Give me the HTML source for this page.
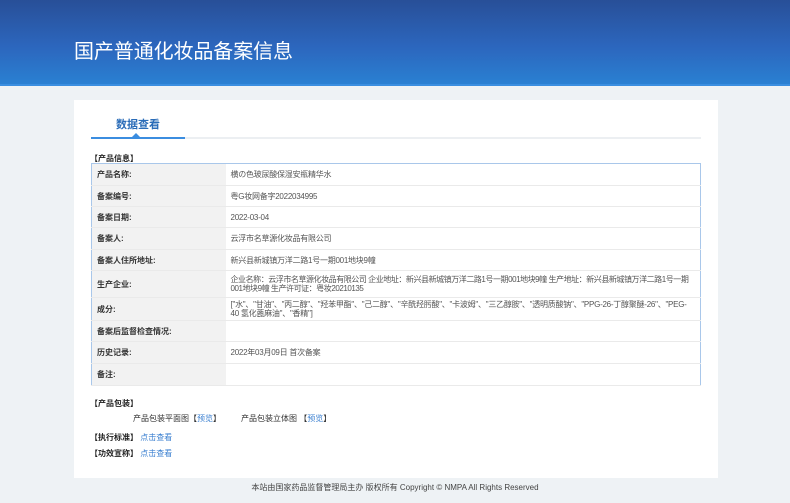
<!DOCTYPE html>
<html><head><meta charset="utf-8"><style>
*{margin:0;padding:0;box-sizing:border-box}
body{width:790px;height:503px;background:#eef2f5;font-family:"Liberation Sans","Noto Sans CJK SC",sans-serif;position:relative;overflow:hidden;color:#333}
.hd{position:absolute;left:0;top:0;width:790px;height:86px;background:linear-gradient(180deg,#284f98 0%,#2c66bd 55%,#2a80d2 100%);border-bottom:2px solid #3a8ee0}
.hd h1{position:absolute;left:74px;top:35px;font-size:20px;font-weight:normal;color:#fff;letter-spacing:-0.1px}
.panel{position:absolute;left:74px;top:100px;width:644px;height:378px;background:#fff}
.tab{position:absolute;left:116px;top:116px;font-size:11px;font-weight:bold;color:#2a6cb8}
.tabline{position:absolute;left:91px;top:137px;width:610px;height:2px;background:#eceff2}
.tabact{position:absolute;left:91px;top:137px;width:94px;height:2px;background:#3b8de0}
.tri{position:absolute;left:132px;top:133px;width:0;height:0;border-left:4px solid transparent;border-right:4px solid transparent;border-bottom:4px solid #3b8de0}
.sec{position:absolute;font-size:8px;font-weight:bold;color:#222}
table{position:absolute;left:91px;top:163px;width:610px;border-collapse:collapse;border:1px solid #a9c7ea;font-size:8px;table-layout:fixed}
td{border-bottom:1px solid #eaeaea;padding:0 4px 0 5px;vertical-align:middle;line-height:9px;overflow:hidden}
td.l{width:134px;background:#f2f2f2;font-weight:bold;color:#333;padding-left:5px}
td.v{color:#555;letter-spacing:-0.25px;white-space:nowrap}
.t{font-size:8px;position:absolute;color:#333}
a{color:#3a7fd0;text-decoration:none}
.ft{position:absolute;left:0;width:790px;top:482px;text-align:center;font-size:8px;color:#444}
</style></head><body>
<div class="hd"><h1>国产普通化妆品备案信息</h1></div>
<div class="panel"></div>
<div class="tab">数据查看</div>
<div class="tabline"></div><div class="tabact"></div><div class="tri"></div>
<div class="sec" style="left:90px;top:153px">【产品信息】</div>
<table>
<tr style="height:22px"><td class="l">产品名称:</td><td class="v">横の色玻尿酸保湿安瓶精华水</td></tr>
<tr style="height:21px"><td class="l">备案编号:</td><td class="v">粤G妆网备字2022034995</td></tr>
<tr style="height:21px"><td class="l">备案日期:</td><td class="v">2022-03-04</td></tr>
<tr style="height:22px"><td class="l">备案人:</td><td class="v">云浮市名草源化妆品有限公司</td></tr>
<tr style="height:21px"><td class="l">备案人住所地址:</td><td class="v">新兴县新城镇万洋二路1号一期001地块9幢</td></tr>
<tr style="height:27px"><td class="l">生产企业:</td><td class="v" style="letter-spacing:-0.45px">企业名称：云浮市名草源化妆品有限公司 企业地址：新兴县新城镇万洋二路1号一期001地块9幢 生产地址：新兴县新城镇万洋二路1号一期<br>001地块9幢 生产许可证：粤妆20210135</td></tr>
<tr style="height:23px"><td class="l">成分:</td><td class="v">["水"、"甘油"、"丙二醇"、"羟苯甲酯"、"己二醇"、"辛酰羟肟酸"、"卡波姆"、"三乙醇胺"、"透明质酸钠"、"PPG-26-丁醇聚醚-26"、"PEG-<br>40 氢化蓖麻油"、"香精"]</td></tr>
<tr style="height:21px"><td class="l">备案后监督检查情况:</td><td class="v"></td></tr>
<tr style="height:22px"><td class="l">历史记录:</td><td class="v">2022年03月09日 首次备案</td></tr>
<tr style="height:22px"><td class="l">备注:</td><td class="v"></td></tr>
</table>
<div class="sec" style="left:90px;top:398px">【产品包装】</div>
<div class="t" style="left:133px;top:413px">产品包装平面图【<a>预览</a>】</div>
<div class="t" style="left:241px;top:413px">产品包装立体图 【<a>预览</a>】</div>
<div class="sec" style="left:90px;top:432px">【执行标准】 <a style="font-weight:normal">点击查看</a></div>
<div class="sec" style="left:90px;top:448px">【功效宣称】 <a style="font-weight:normal">点击查看</a></div>
<div class="ft" style="left:0">本站由国家药品监督管理局主办 版权所有 Copyright © NMPA All Rights Reserved</div>
</body></html>
